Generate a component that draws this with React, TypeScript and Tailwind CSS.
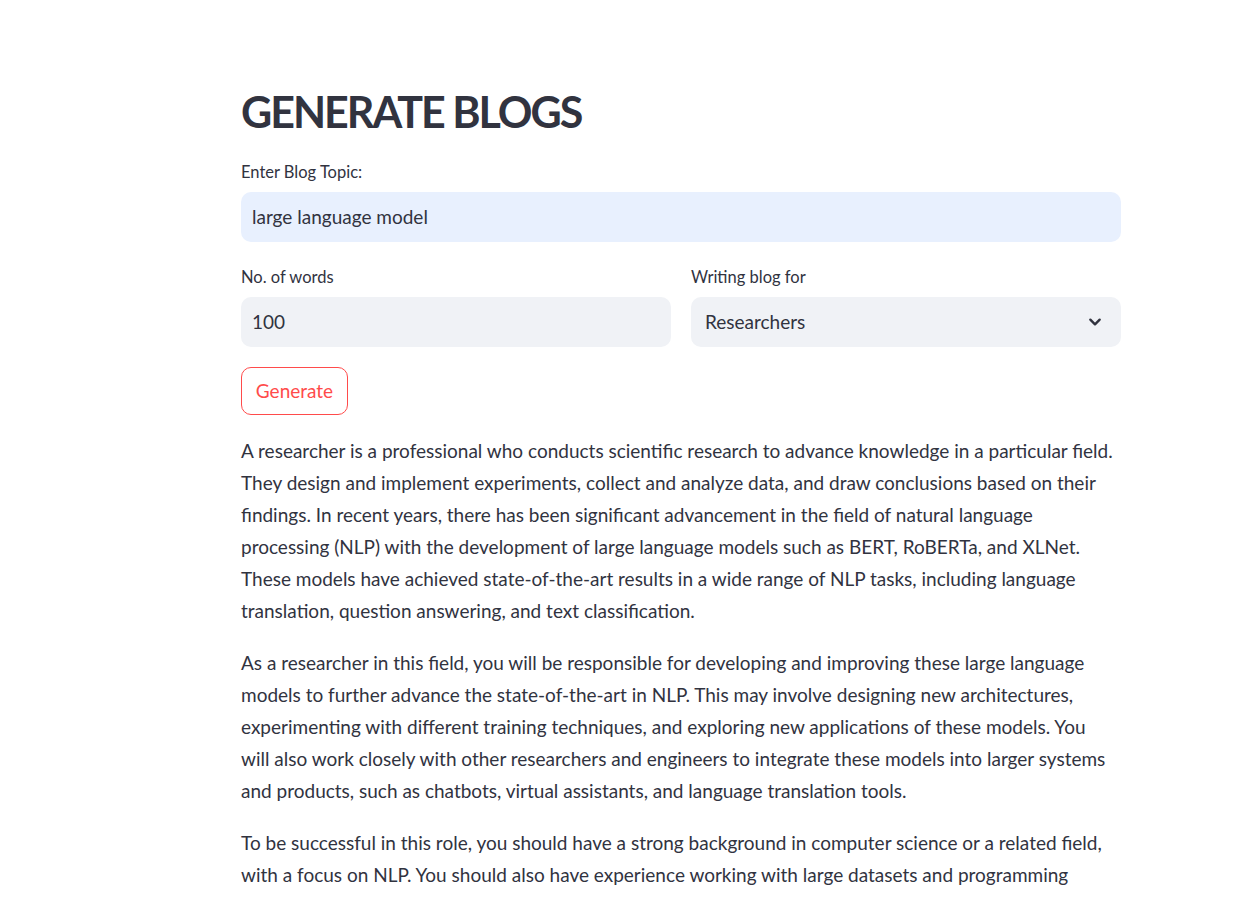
import React from "react";

const p1 = [
  "A researcher is a professional who conducts scientific research to advance knowledge in a particular field.",
  "They design and implement experiments, collect and analyze data, and draw conclusions based on their",
  "findings. In recent years, there has been significant advancement in the field of natural language",
  "processing (NLP) with the development of large language models such as BERT, RoBERTa, and XLNet.",
  "These models have achieved state-of-the-art results in a wide range of NLP tasks, including language",
  "translation, question answering, and text classification.",
];
const p2 = [
  "As a researcher in this field, you will be responsible for developing and improving these large language",
  "models to further advance the state-of-the-art in NLP. This may involve designing new architectures,",
  "experimenting with different training techniques, and exploring new applications of these models. You",
  "will also work closely with other researchers and engineers to integrate these models into larger systems",
  "and products, such as chatbots, virtual assistants, and language translation tools.",
];
const p3 = [
  "To be successful in this role, you should have a strong background in computer science or a related field,",
  "with a focus on NLP. You should also have experience working with large datasets and programming",
];

function Para({ lines }: { lines: string[] }) {
  return (
    <p className="mb-[20px] text-[19px] leading-[32px] text-[#31333f]">
      {lines.map((l, i) => (
        <span key={i} className="block whitespace-nowrap">
          {l}
        </span>
      ))}
    </p>
  );
}

export default function App() {
  return (
    <div
      className="min-h-screen bg-white text-[#31333f]"
      style={{ fontFamily: "Lato, 'Noto Sans', sans-serif" }}
    >
      <div className="ml-[241px] w-[880px] pt-[79px]">
        <h1 className="h-[66px] text-[43px] font-bold leading-[66px] tracking-[-2px] text-[#31333f]">
          GENERATE BLOGS
        </h1>
        <div className="mt-[15px]">
          <label className="block h-[25px] text-[16.5px] leading-[25px]">Enter Blog Topic:</label>
          <div className="mt-[7px] flex h-[50px] items-center rounded-[10px] bg-[#e8f0fe] px-[11px] text-[19px] text-[#31333f]">
            large language model
          </div>
        </div>
        <div className="mt-[23px] grid grid-cols-2 gap-[20px]">
          <div>
            <label className="block h-[25px] text-[16.5px] leading-[25px]">No. of words</label>
            <div className="mt-[7px] flex h-[50px] items-center rounded-[10px] bg-[#f0f2f6] px-[11px] text-[19px]">
              100
            </div>
          </div>
          <div>
            <label className="block h-[25px] text-[16.5px] leading-[25px]">Writing blog for</label>
            <div className="mt-[7px] flex h-[50px] items-center justify-between rounded-[10px] bg-[#f0f2f6] pl-[14px] pr-[18px] text-[19px]">
              <span>Researchers</span>
              <svg width="16" height="16" viewBox="0 0 24 24" fill="none">
                <path d="M5 8.5l7 7 7-7" stroke="#31333f" strokeWidth="3.6" strokeLinecap="round" strokeLinejoin="round" />
              </svg>
            </div>
          </div>
        </div>
        <button className="mt-[20px] h-[48px] w-[107px] rounded-[10px] border border-[#ff4b4b] bg-white text-[19px] text-[#ff4b4b]">
          Generate
        </button>
        <div className="mt-[20px]">
          <Para lines={p1} />
          <Para lines={p2} />
          <Para lines={p3} />
        </div>
      </div>
    </div>
  );
}
